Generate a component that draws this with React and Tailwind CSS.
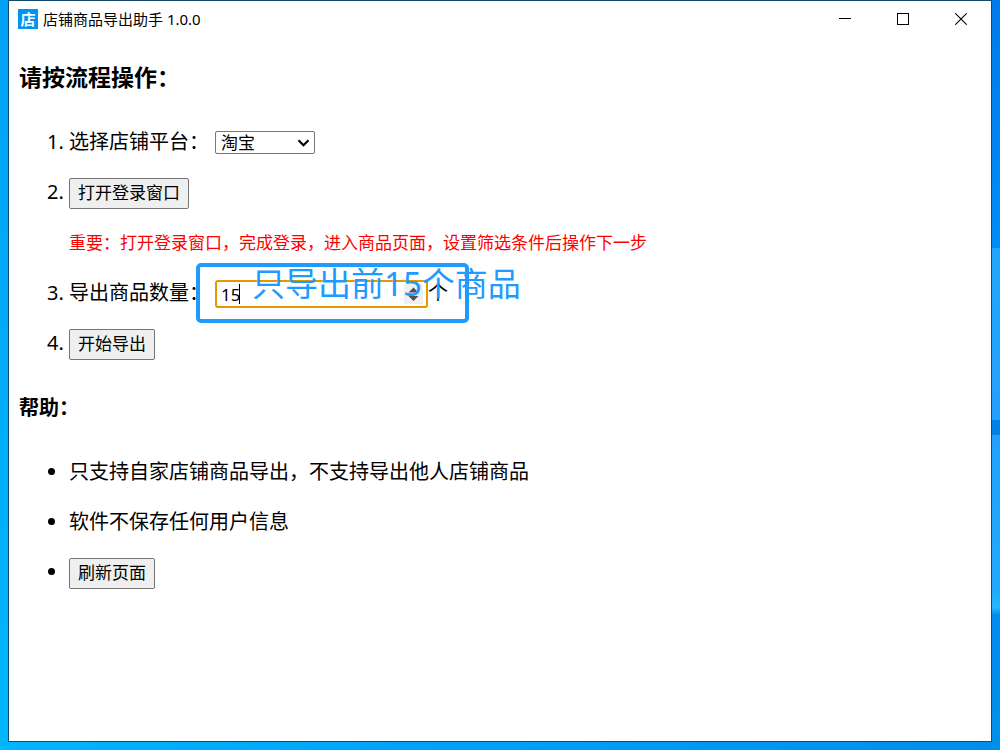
import { useState } from "react";

const buttonClass =
  "h-[31px] px-2 bg-[#efefef] hover:bg-[#e5e5e5] border border-[#767676] rounded-[2px] text-[17px] leading-[24px]";

function TitleBar() {
  return (
    <header className="flex h-[36px] items-center justify-between pr-px pl-[9px]">
      <div className="flex items-center gap-[5px]">
        <span className="flex h-5 w-5 items-center justify-center bg-[#0094f5] text-[15px] leading-[20px] font-bold text-white">
          店
        </span>
        <span className="text-[15px] leading-[20px]">
          店铺商品导出助手 1.0.0
        </span>
      </div>
      <div className="flex h-full">
        <button
          type="button"
          aria-label="最小化"
          className="flex w-[58px] items-center justify-center hover:bg-gray-200"
        >
          <svg width="12" height="12" viewBox="0 0 12 12" shapeRendering="crispEdges">
            <path d="M0 5.5h12" stroke="black" />
          </svg>
        </button>
        <button
          type="button"
          aria-label="最大化"
          className="flex w-[58px] items-center justify-center hover:bg-gray-200"
        >
          <svg width="12" height="12" viewBox="0 0 12 12" shapeRendering="crispEdges">
            <path d="M0.5 0.5h11v11h-11z" stroke="black" fill="none" />
          </svg>
        </button>
        <button
          type="button"
          aria-label="关闭"
          className="flex w-[58px] items-center justify-center hover:bg-red-500"
        >
          <svg width="12" height="12" viewBox="0 0 12 12">
            <path d="M0.3 0.3l11.4 11.4M11.7 0.3L0.3 11.7" stroke="black" strokeWidth="1.1" />
          </svg>
        </button>
      </div>
    </header>
  );
}

export default function App() {
  const [platform, setPlatform] = useState("taobao");
  const [count, setCount] = useState("15");

  return (
    <div className="flex min-h-screen bg-[linear-gradient(90deg,#00b4ff,#00a0f4_50%,#008ee8)] font-['Noto_Sans','Noto_Sans_CJK_SC',sans-serif] text-black">
      <div className="w-2 shrink-0 bg-[linear-gradient(#00a2f6,#00b6ff)]" />

      <div className="mb-2 min-w-0 flex-1 border border-[#174b6b] bg-white">
        <TitleBar />

        <main className="px-[10px] pt-[25px] text-[20px] leading-[30px]">
          <h1 className="text-[23px] font-bold">请按流程操作：</h1>

          <ol className="mt-[35px] list-decimal space-y-5 pl-[50px]">
            <li>
              <div className="flex h-[30px] items-center">
                <label htmlFor="platform">选择店铺平台：</label>
                <span className="relative ml-[6px]">
                  <select
                    id="platform"
                    className="block h-[23px] w-[100px] appearance-none rounded-[2px] border border-[#767676] bg-white px-[5px] text-[17px] leading-[21px]"
                    value={platform}
                    onChange={(e) => setPlatform(e.target.value)}
                  >
                    <option value="taobao">淘宝</option>
                    <option value="tmall">天猫</option>
                  </select>
                  <svg
                    className="pointer-events-none absolute top-2 right-[5px]"
                    width="13"
                    height="8"
                    viewBox="0 0 13 8"
                    fill="none"
                  >
                    <path d="M1.5 1.2l5 5 5-5" stroke="black" strokeWidth="2.1" />
                  </svg>
                </span>
              </div>
            </li>
            <li>
              <div className="flex h-[30px] items-center">
                <button type="button" className={buttonClass}>
                  打开登录窗口
                </button>
              </div>
              <p className="mt-5 text-[17px] text-[#ff0000]">
                重要：打开登录窗口，完成登录，进入商品页面，设置筛选条件后操作下一步
              </p>
            </li>
            <li className="relative">
              <div className="flex h-[30px] items-center">
                <label htmlFor="count">导出商品数量：</label>
                <span className="relative ml-[6px] self-end">
                  <input
                    id="count"
                    type="number"
                    className="block h-[28px] w-[213px] [appearance:textfield] rounded-[3px] border-2 border-[#e59700] px-1 text-[17px] leading-[24px] outline-none"
                    value={count}
                    onChange={(e) => setCount(e.target.value)}
                  />
                  <span className="absolute top-1 left-[24px] h-5 w-px bg-black" />
                  <svg
                    className="pointer-events-none absolute top-1 right-[5px]"
                    width="19"
                    height="20"
                    viewBox="0 0 19 20"
                  >
                    <path d="M0 0h19v20H0z" fill="#efefef" />
                    <path d="M9.5 3.5l5 5h-10zM9.5 17l5-5h-10z" fill="#505050" />
                  </svg>
                </span>
                <span>个</span>
              </div>

              {/* highlight frame and its caption */}
              <div className="pointer-events-none absolute -top-[15px] left-[127px] h-[60px] w-[273px] rounded-[5px] border-4 border-[#1e9bff]" />
              <div className="pointer-events-none absolute -top-[14px] left-[183px] text-[33px] leading-[40px] whitespace-nowrap text-[#1e9bff]">
                只导出前15个商品
              </div>
            </li>
            <li>
              <div className="flex h-[30px] items-center">
                <button type="button" className={buttonClass}>
                  开始导出
                </button>
              </div>
            </li>
          </ol>

          <h2 className="mt-[34px] font-bold">帮助：</h2>

          <ul className="mt-[34px] list-disc space-y-5 pl-[50px]">
            <li>只支持自家店铺商品导出，不支持导出他人店铺商品</li>
            <li>软件不保存任何用户信息</li>
            <li>
              <div className="flex h-[30px] items-center">
                <button type="button" className={buttonClass}>
                  刷新页面
                </button>
              </div>
            </li>
          </ul>
        </main>
      </div>

      <div className="w-2 shrink-0 bg-[linear-gradient(#007bea,#008cf8_33%,#22a5ff_33%,#22a0ff_56%,#0080e8_56%,#0080e8_58%,#22a0ff_58%,#20aaff_79%,#2ab4ff_81%,#008cf2_82%,#0090e8)]" />
    </div>
  );
}
